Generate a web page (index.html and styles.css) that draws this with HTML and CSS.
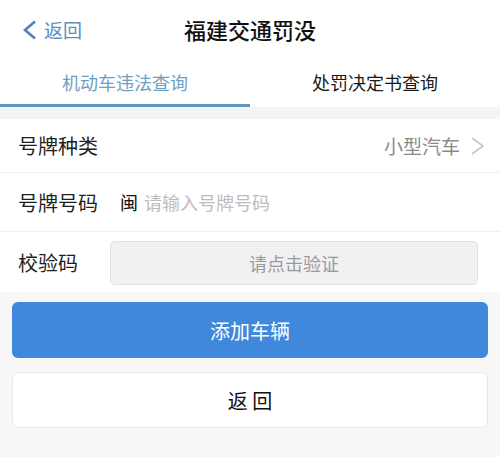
FILE: index.html
```html
<!DOCTYPE html>
<html lang="zh">
<head>
<meta charset="utf-8">
<title>福建交通罚没</title>
<link rel="stylesheet" href="styles.css">
</head>
<body>
<div class="page">
  <header class="nav">
    <div class="back">
      <svg class="back-icon" width="16" height="20" viewBox="0 0 16 20"><polyline points="12,1.5 2,10 12,18.5" fill="none" stroke="#4f83b8" stroke-width="2.6" stroke-linejoin="miter"/></svg>
      <span class="back-text">返回</span>
    </div>
    <h1 class="title">福建交通罚没</h1>
  </header>
  <nav class="tabs">
    <div class="tab tab-active">机动车违法查询</div>
    <div class="tab">处罚决定书查询</div>
  </nav>
  <div class="gap"></div>
  <section class="form">
    <div class="row row-first">
      <span class="label">号牌种类</span>
      <span class="select">小型汽车
        <svg class="arrow" width="16" height="20" viewBox="0 0 16 20"><polyline points="2,2 13,10 2,18" fill="none" stroke="#c4c4c4" stroke-width="1.6"/></svg>
      </span>
    </div>
    <div class="row row-second">
      <span class="label">号牌号码</span>
      <span class="prefix">闽</span>
      <span class="placeholder">请输入号牌号码</span>
    </div>
    <div class="row row-third">
      <span class="label label-short">校验码</span>
      <div class="verify">请点击验证</div>
    </div>
  </section>
  <div class="actions">
    <button class="btn btn-primary">添加车辆</button>
    <button class="btn btn-default">返 回</button>
  </div>
</div>
</body>
</html>
```
FILE: styles.css
```css
* { box-sizing: border-box; margin: 0; padding: 0; }
html, body { width: 500px; height: 457px; overflow: hidden; }
body {
  background: #f7f7f8;
  font-family: "Noto Sans CJK SC", "Noto Sans", sans-serif;
  color: #222;
}
.page { display: flex; flex-direction: column; }
.nav {
  position: relative;
  height: 58px;
  background: #fff;
  display: flex;
  align-items: center;
  justify-content: center;
}
.back {
  position: absolute;
  left: 23px;
  top: 18px;
  display: flex;
  align-items: center;
  gap: 5px;
}
.back-icon { display: block; }
.back-text { font-size: 19px; color: #5b8fc2; line-height: 24px; }
.title { font-size: 22px; font-weight: 500; color: #111; line-height: 30px; margin-top: 0; }
.tabs {
  display: flex;
  height: 49px;
  background: #fff;
}
.tab {
  flex: 1;
  display: flex;
  align-items: center;
  justify-content: center;
  font-size: 18px;
  color: #1a1a1a;
  border-bottom: 3px solid transparent;
  padding-top: 1px;
}
.tab-active { color: #6e9ec2; border-bottom-color: #5d98bb; }
.gap { height: 12px; background: #f4f4f6; }
.form { background: #fff; }
.row {
  display: flex;
  align-items: center;
  padding-left: 18px;
  font-size: 20px;
}
.row-first { height: 54px; }
.row-first::after { content: none; }
.row-first { border-bottom: 1px solid #f0f0f2; margin-left: 0; }
.row-second { height: 59px; border-bottom: 1px solid #f0f0f2; }
.row-third { height: 60px; padding-right: 22px; }
.label { width: 102px; flex: none; color: #1e1e1e; }
.label-short { width: 92px; }
.select {
  margin-left: auto;
  margin-right: 14px;
  display: flex;
  align-items: center;
  gap: 10px;
  font-size: 19px;
  color: #8a8a8a;
}
.arrow { display: block; }
.prefix { font-size: 18px; color: #111; margin-right: 6px; }
.placeholder { font-size: 18px; color: #bdbdbd; }
.verify {
  flex: 1;
  height: 44px;
  margin-top: 1px;
  background: #f1f1f3;
  border: 1px solid #e2e2e4;
  border-radius: 5px;
  display: flex;
  align-items: center;
  justify-content: center;
  font-size: 18px;
  color: #9a9a9a;
}
.actions {
  display: flex;
  flex-direction: column;
  gap: 14px;
  padding: 10px 12px 0;
}
.btn {
  height: 56px;
  border-radius: 6px;
  font-family: "Noto Sans CJK SC", "Noto Sans", sans-serif;
  font-size: 20px;
  display: flex;
  align-items: center;
  justify-content: center;
}
.btn-primary { background: #3f88dc; color: #fff; border: none; }
.btn-default { background: #fff; color: #111; border: 1px solid #e8e8ea; }
```
